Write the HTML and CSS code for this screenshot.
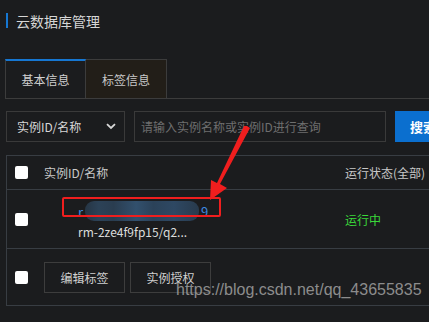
FILE: index.html
```html
<!DOCTYPE html>
<html lang="zh">
<head>
<meta charset="utf-8">
<link rel="stylesheet" href="styles.css">
</head>
<body>
<div class="page">
  <div class="title"><span class="bar"></span>云数据库管理</div>
  <div class="tabs">
    <div class="tab active">基本信息</div>
    <div class="tab other">标签信息</div>
  </div>
  <div class="toolbar">
    <div class="select">实例ID/名称
      <svg class="chev" width="10" height="7" viewBox="0 0 10 7"><path d="M1 1.2 L5 5 L9 1.2" fill="none" stroke="#d8d8d8" stroke-width="1.8"/></svg>
    </div>
    <div class="input">请输入实例名称或实例ID进行查询</div>
    <div class="btn-search">搜索</div>
  </div>
  <div class="table">
    <div class="row head">
      <span class="cb"></span>
      <span class="c-name">实例ID/名称</span>
      <span class="c-status">运行状态(全部)</span>
    </div>
    <div class="row data">
      <span class="cb"></span>
      <div class="c-name">
        <div class="idline"><span class="blue">r</span><span class="blur"></span><span class="blue">9</span></div>
        <div class="sub">rm-2ze4f9fp15/q2...</div>
      </div>
      <span class="c-status run">运行中</span>
    </div>
    <div class="row foot">
      <span class="cb"></span>
      <div class="btns">
        <span class="btn">编辑标签</span>
        <span class="btn">实例授权</span>
      </div>
    </div>
  </div>
  <div class="redbox"></div>
  <svg class="arrow" width="60" height="80" viewBox="0 0 60 80">
    <polygon points="47,0 50,2 20,58 27,62 10,74 11,54 17,57 44,0" fill="#f01e1e"/>
  </svg>
  <div class="wm">https://blog.csdn.net/qq_43655835</div>
</div>
</body>
</html>
```
FILE: styles.css
```css
html, body {
  margin: 0;
  padding: 0;
  background: #1b1c1e;
  overflow: hidden;
}
.page {
  position: relative;
  width: 429px;
  height: 322px;
  overflow: hidden;
  font-family: "Noto Sans CJK SC", "Microsoft YaHei", sans-serif;
  font-size: 12px;
  color: #d0d0d0;
}
.title {
  display: flex;
  align-items: center;
  margin: 12px 0 0 6px;
  height: 17px;
  font-size: 14px;
  color: #d6d6d6;
}
.title .bar {
  width: 2px;
  height: 15px;
  background: #1677d2;
  margin-right: 8px;
}
.tabs {
  display: flex;
  margin: 30px 0 0 5px;
  height: 39px;
  border-bottom: 1px solid #3c3c3c;
}
.tab {
  width: 81px;
  box-sizing: border-box;
  display: flex;
  align-items: center;
  justify-content: center;
  border: 1px solid #3c3c3c;
  border-bottom: none;
  color: #d0d0d0;
}
.tab.active {
  border-top: 2px solid #1677d2;
}
.tab.other {
  background: #221e18;
  border-left: none;
  color: #c8c8c8;
}
.toolbar {
  display: flex;
  gap: 9px;
  margin: 12px 0 0 6px;
  height: 31px;
  width: 460px;
}
.toolbar > * {
  flex: none;
}
.select, .input {
  box-sizing: border-box;
  border: 1px solid #3a3a3a;
  display: flex;
  align-items: center;
  height: 31px;
}
.select {
  width: 119px;
  padding: 0 8px 0 10px;
  justify-content: space-between;
  color: #d6d6d6;
}
.input {
  width: 252px;
  padding-left: 6px;
  color: #6e6e6e;
}
.btn-search {
  width: 60px;
  background: #0b6fcf;
  color: #fff;
  font-weight: bold;
  font-size: 13px;
  display: flex;
  align-items: center;
  padding-left: 15px;
}
.table {
  margin: 13px 0 0 6px;
  width: 460px;
  border: 1px solid #383d43;
  border-right: none;
}
.row {
  display: flex;
  align-items: center;
  box-sizing: border-box;
  padding-left: 8px;
}
.row.head {
  height: 34px;
  border-bottom: 1px solid #383d43;
  color: #c8c8c8;
}
.row.data {
  height: 59px;
  border-bottom: 1px solid #383d43;
}
.row.foot {
  height: 56px;
  align-items: center;
}
.cb {
  width: 13px;
  height: 13px;
  background: #fff;
  border-radius: 2px;
  flex: none;
}
.c-name {
  margin-left: 16px;
  width: 301px;
  flex: none;
}
.row.data .c-name {
  margin-left: 50px;
  width: 267px;
  padding-top: 4px;
}
.idline {
  display: flex;
  align-items: center;
  height: 17px;
  color: #3d8ae0;
  font-size: 13px;
}
.blur {
  width: 114px;
  height: 20px;
  margin: 0 2px 0 2px;
  border-radius: 9px;
  background: linear-gradient(90deg, #263544 0%, #2c4257 12%, #2a3d50 25%, #32506d 45%, #2b4259 60%, #2e4863 78%, #283a4c 100%);
}
.sub {
  margin-top: 3px;
  color: #dcdcdc;
  font-size: 12px;
}
.c-status {
  color: #c8c8c8;
  white-space: nowrap;
}
.run {
  color: #3ad83a;
}
.btns {
  display: flex;
  gap: 5px;
  margin-left: 16px;
  margin-top: 0;
}
.btn {
  width: 81px;
  height: 31px;
  box-sizing: border-box;
  border: 1px solid #3d3d3d;
  display: flex;
  align-items: center;
  justify-content: center;
  color: #d0d0d0;
}
.redbox {
  position: absolute;
  left: 62px;
  top: 197px;
  width: 159px;
  height: 20px;
  box-sizing: border-box;
  border: 2.5px solid #f01e1e;
  border-radius: 2px;
}
.arrow {
  position: absolute;
  left: 200px;
  top: 126px;
}
.wm {
  position: absolute;
  left: 176px;
  top: 281px;
  font-family: "Liberation Sans", Arial, sans-serif;
  font-size: 16px;
  color: #a0a0a0;
  opacity: 0.85;
}
```
